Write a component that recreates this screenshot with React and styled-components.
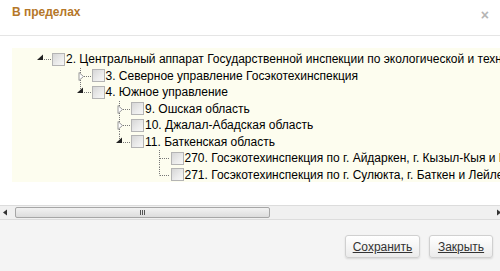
import React from 'react'
import styled, { createGlobalStyle } from 'styled-components'

const GlobalStyle = createGlobalStyle`
  html, body {
    margin: 0;
    padding: 0;
    background: #fff;
    overflow: hidden;
  }
  body {
    font-family: "Liberation Sans", Arial, sans-serif;
  }
`

const tree = [
  { level: 0, icon: 'open', root: true, text: '2. Центральный аппарат Государственной инспекции по экологической и технической безопасности' },
  { level: 1, icon: 'closed', last: false, text: '3. Северное управление Госэкотехинспекция' },
  { level: 1, icon: 'open', last: true, text: '4. Южное управление' },
  { level: 2, icon: 'closed', last: false, text: '9. Ошская область' },
  { level: 2, icon: 'closed', last: false, text: '10. Джалал-Абадская область' },
  { level: 2, icon: 'open', last: true, text: '11. Баткенская область' },
  { level: 3, icon: 'leaf', last: false, text: '270. Госэкотехинспекция по г. Айдаркен, г. Кызыл-Кыя и Кадамжайскому району' },
  { level: 3, icon: 'leaf', last: true, text: '271. Госэкотехинспекция по г. Сулюкта, г. Баткен и Лейлекскому району' },
]

const Modal = styled.div`
  width: 500px;
  height: 271px;
  display: flex;
  flex-direction: column;
  background: #fff;
`

const Header = styled.div`
  height: 36px;
  flex: none;
  display: flex;
  align-items: flex-start;
  justify-content: space-between;
  padding: 4px 11px 0 12px;
  box-sizing: border-box;
  border-bottom: 1px solid #e5e5e5;
`

const Title = styled.div`
  font-size: 12px;
  font-weight: bold;
  color: #b57729;
  line-height: 16px;
`

const Close = styled.div`
  margin-top: 4px;
  font-size: 14px;
  font-weight: bold;
  color: #b5b5b5;
  line-height: 14px;
`

const Body = styled.div`
  flex: 1;
  padding: 12px 0 0 12px;
  overflow: hidden;
`

const TreeBox = styled.div`
  background: #fdfdef;
  height: 134px;
  padding-top: 3px;
  box-sizing: border-box;
  overflow: hidden;
`

const Row = styled.div`
  display: flex;
  align-items: center;
  height: 16.5px;
  padding-left: ${p => 24 + p.$level * 39.5}px;
  white-space: nowrap;
`

const Connector = styled.svg`
  flex: none;
  width: 16px;
  height: 16.5px;
`

const Check = styled.span`
  flex: none;
  width: 11px;
  height: 11px;
  border: 1px solid #b4b4b4;
  background: linear-gradient(135deg, #d6d6d6 0%, #ececec 60%, #f7f7f7 100%);
  margin-right: 1px;
`

const Label = styled.span`
  font-size: 12px;
  color: #000;
  line-height: 16px;
`

const Scrollbar = styled.div`
  flex: none;
  height: 15px;
  display: flex;
  align-items: center;
  background: #f0f0f0;
  border-top: 1px solid #dcdcdc;
  border-bottom: 1px solid #dcdcdc;
  box-sizing: border-box;
`

const Arrow = styled.svg`
  flex: none;
  width: ${p => p.$w || 14}px;
  height: 13px;
`

const Thumb = styled.div`
  width: 255px;
  height: 11px;
  margin-left: 1px;
  box-sizing: border-box;
  border: 1px solid #a6a6a6;
  border-radius: 2px;
  background: linear-gradient(#f2f2f2, #dcdcdc);
  display: flex;
  align-items: center;
  justify-content: center;
`

const Grip = styled.div`
  display: flex;
  gap: 1px;
  span {
    width: 1px;
    height: 5px;
    background: #555;
  }
`

const Track = styled.div`
  flex: 1;
`

const Footer = styled.div`
  flex: none;
  height: 51px;
  background: #f4f4f4;
  display: flex;
  justify-content: flex-end;
  align-items: flex-start;
  gap: 9px;
  padding: 15px 7px 0 0;
  box-sizing: border-box;
`

const Button = styled.button`
  box-sizing: border-box;
  height: 23px;
  width: ${p => p.$w}px;
  padding: 0;
  border: 1px solid #d0d0d0;
  border-radius: 3px;
  background: linear-gradient(#ffffff, #ebebeb);
  box-shadow: 0 1px 2px rgba(0, 0, 0, 0.12);
  font-family: "Liberation Sans", Arial, sans-serif;
  font-size: 12px;
  color: #333;
  text-decoration: underline;
`

const dot = { stroke: '#777', strokeWidth: 1, strokeDasharray: '1 1', fill: 'none' }

const Lines = ({ node }) => (
  <Connector viewBox="0 0 16 16.5">
    {!node.root && (
      <line x1="4.5" y1="0" x2="4.5" y2={node.last ? 8.5 : 16.5} style={dot} />
    )}
    <line x1={node.icon === 'leaf' ? 5 : 8} y1="8.5" x2="15" y2="8.5" style={dot} />
    {node.icon === 'open' && (
      <polygon points="1,9 7,3.5 7,9" fill="#222" />
    )}
    {node.icon === 'closed' && (
      <polygon points="3,4.5 3,12.5 7.5,8.5" fill="#fff" stroke="#999" strokeWidth="1" />
    )}
  </Connector>
)

export default function App() {
  return (
    <>
      <GlobalStyle />
      <Modal>
        <Header>
          <Title>В пределах</Title>
          <Close>×</Close>
        </Header>
        <Body>
          <TreeBox>
            {tree.map((node, i) => (
              <Row key={i} $level={node.level}>
                <Lines node={node} />
                <Check />
                <Label>{node.text}</Label>
              </Row>
            ))}
          </TreeBox>
        </Body>
        <Scrollbar>
          <Arrow viewBox="0 0 14 13">
            <polygon points="3,6.5 7,3.5 7,9.5" fill="#333" />
          </Arrow>
          <Thumb>
            <Grip><span /><span /><span /></Grip>
          </Thumb>
          <Track />
          <Arrow viewBox="0 0 5 13" $w={5}>
            <polygon points="2,3.5 6,6.5 2,9.5" fill="#333" />
          </Arrow>
        </Scrollbar>
        <Footer>
          <Button $w={75}>Сохранить</Button>
          <Button $w={64}>Закрыть</Button>
        </Footer>
      </Modal>
    </>
  )
}
